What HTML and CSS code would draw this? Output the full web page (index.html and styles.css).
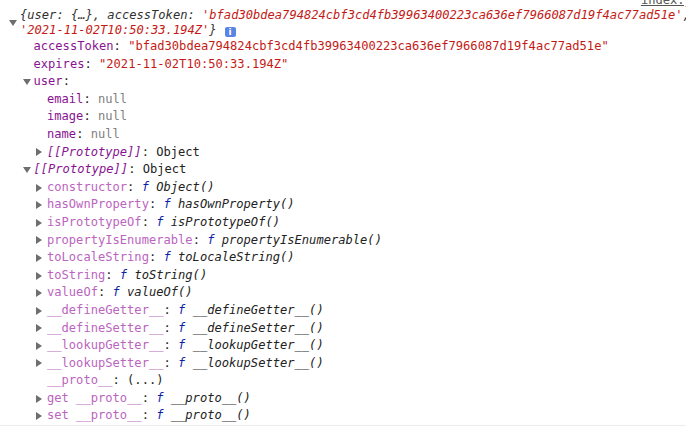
FILE: index.html
```html
<!DOCTYPE html>
<html>
<head>
<meta charset="utf-8">
<link rel="stylesheet" href="styles.css">
</head>
<body>
<div class="msg">
  <div class="src"><a class="link">index.js:23</a></div>
  <div class="summary">
    <span class="tw tw-root"><span class="tri-d"></span></span>
    <div class="sum-text"><span class="it">{user: {…}, accessToken: <span class="str">'bfad30bdea794824cbf3cd4fb39963400223ca636ef7966087d19f4ac77ad51e'</span>,</span>
<span class="it"><span class="str">'2021-11-02T10:50:33.194Z'</span>}</span><span class="info">i</span></div>
  </div>
  <div class="kids">
    <div class="row"><span class="tw"></span><span class="k">accessToken</span>: <span class="str">"bfad30bdea794824cbf3cd4fb39963400223ca636ef7966087d19f4ac77ad51e"</span></div>
    <div class="row"><span class="tw"></span><span class="k">expires</span>: <span class="str">"2021-11-02T10:50:33.194Z"</span></div>
    <div class="row"><span class="tw"><span class="tri-d"></span></span><span class="k">user</span>:</div>
    <div class="kids">
      <div class="row"><span class="tw"></span><span class="k">email</span>: <span class="null">null</span></div>
      <div class="row"><span class="tw"></span><span class="k">image</span>: <span class="null">null</span></div>
      <div class="row"><span class="tw"></span><span class="k">name</span>: <span class="null">null</span></div>
      <div class="row"><span class="tw"><span class="tri-r"></span></span><span class="k it">[[Prototype]]</span>: Object</div>
    </div>
    <div class="row"><span class="tw"><span class="tri-d"></span></span><span class="k it">[[Prototype]]</span>: Object</div>
    <div class="kids">
      <div class="row"><span class="tw"><span class="tri-r"></span></span><span class="kd">constructor</span>: <span class="fn">f</span> <span class="it">Object()</span></div>
      <div class="row"><span class="tw"><span class="tri-r"></span></span><span class="kd">hasOwnProperty</span>: <span class="fn">f</span> <span class="it">hasOwnProperty()</span></div>
      <div class="row"><span class="tw"><span class="tri-r"></span></span><span class="kd">isPrototypeOf</span>: <span class="fn">f</span> <span class="it">isPrototypeOf()</span></div>
      <div class="row"><span class="tw"><span class="tri-r"></span></span><span class="kd">propertyIsEnumerable</span>: <span class="fn">f</span> <span class="it">propertyIsEnumerable()</span></div>
      <div class="row"><span class="tw"><span class="tri-r"></span></span><span class="kd">toLocaleString</span>: <span class="fn">f</span> <span class="it">toLocaleString()</span></div>
      <div class="row"><span class="tw"><span class="tri-r"></span></span><span class="kd">toString</span>: <span class="fn">f</span> <span class="it">toString()</span></div>
      <div class="row"><span class="tw"><span class="tri-r"></span></span><span class="kd">valueOf</span>: <span class="fn">f</span> <span class="it">valueOf()</span></div>
      <div class="row"><span class="tw"><span class="tri-r"></span></span><span class="kd">__defineGetter__</span>: <span class="fn">f</span> <span class="it">__defineGetter__()</span></div>
      <div class="row"><span class="tw"><span class="tri-r"></span></span><span class="kd">__defineSetter__</span>: <span class="fn">f</span> <span class="it">__defineSetter__()</span></div>
      <div class="row"><span class="tw"><span class="tri-r"></span></span><span class="kd">__lookupGetter__</span>: <span class="fn">f</span> <span class="it">__lookupGetter__()</span></div>
      <div class="row"><span class="tw"><span class="tri-r"></span></span><span class="kd">__lookupSetter__</span>: <span class="fn">f</span> <span class="it">__lookupSetter__()</span></div>
      <div class="row"><span class="tw"></span><span class="kd">__proto__</span>: (...)</div>
      <div class="row"><span class="tw"><span class="tri-r"></span></span><span class="kd">get __proto__</span>: <span class="fn">f</span> <span class="it">__proto__()</span></div>
      <div class="row"><span class="tw"><span class="tri-r"></span></span><span class="kd">set __proto__</span>: <span class="fn">f</span> <span class="it">__proto__()</span></div>
    </div>
  </div>
</div>
</body>
</html>
```

FILE: styles.css
```css
html, body {
  margin: 0;
  padding: 0;
  background: #ffffff;
}
body {
  font-family: "DejaVu Sans Mono", "Liberation Mono", monospace;
  font-size: 12.1px;
  color: #222222;
  overflow: hidden;
  height: 432px;
}
.msg {
  padding-left: 8px;
  border-bottom: 1px solid #ececec;
  overflow: hidden;
}
.src {
  height: 8px;
  display: flex;
  justify-content: flex-end;
  align-items: flex-end;
  overflow: hidden;
}
.link {
  line-height: 15px;
  color: #545454;
  text-decoration: underline;
  white-space: nowrap;
  margin-right: -35px;
}
.summary {
  display: flex;
  align-items: flex-start;
  line-height: 15px;
  height: 30px;
}
.sum-text {
  white-space: pre;
  color: #303030;
}
.tw {
  display: inline-flex;
  align-items: center;
  width: 12px;
  height: 17.6px;
  vertical-align: top;
  flex: none;
}
.tw.tw-root {
  height: 29px;
}
.tri-r {
  margin-left: 1px;
  width: 0;
  height: 0;
  border-left: 6px solid #6e6e6e;
  border-top: 4px solid transparent;
  border-bottom: 4px solid transparent;
}
.tri-d {
  margin-left: 1px;
  width: 0;
  height: 0;
  border-top: 6px solid #6e6e6e;
  border-left: 4px solid transparent;
  border-right: 4px solid transparent;
}
.kids {
  padding-left: 13.5px;
}
.row {
  height: 17.6px;
  line-height: 17.6px;
  white-space: pre;
}
.it {
  font-style: italic;
}
.k {
  color: #881391;
}
.kd {
  color: #bb64c0;
}
.str {
  color: #c41a16;
}
.null {
  color: #808080;
}
.fn {
  color: #0d22aa;
  font-style: italic;
}
.info {
  display: inline-block;
  width: 11px;
  height: 10px;
  margin-left: 8px;
  border-radius: 2px;
  background: #5a85e4;
  color: #ffffff;
  font-family: "DejaVu Sans", sans-serif;
  font-weight: bold;
  font-style: normal;
  font-size: 9px;
  line-height: 10px;
  text-align: center;
  vertical-align: -1px;
}
```
